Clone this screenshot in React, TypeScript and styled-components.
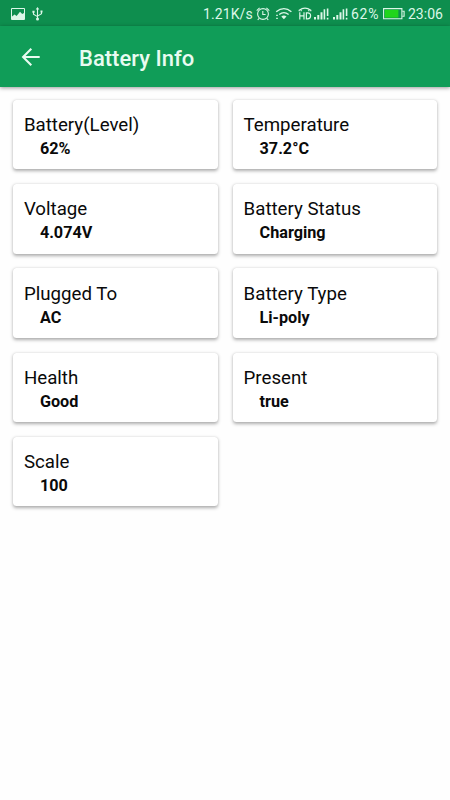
import React from 'react';
import styled, { createGlobalStyle } from 'styled-components';

const GlobalStyle = createGlobalStyle`
  * { box-sizing: border-box; }
  body {
    margin: 0;
    background: #fefefe;
    font-family: Roboto, sans-serif;
    color: #0a0a0a;
  }
`;

const Screen = styled.div`
  width: 450px;
  min-height: 800px;
  background: #fefefe;
`;

const StatusBar = styled.div`
  display: flex;
  align-items: center;
  justify-content: space-between;
  height: 26px;
  padding: 1px 6px 0 11px;
  background: #0e8e4e;
  color: #dcf7e8;
`;

const StatusGroup = styled.div`
  display: flex;
  align-items: center;
`;

const StatusIcon = styled.svg<{ $gap: number }>`
  display: block;
  flex: none;
  margin-left: ${(p) => p.$gap}px;
`;

const StatusText = styled.span<{ $width: number; $gap?: number; $spacing?: number }>`
  flex: none;
  width: ${(p) => p.$width}px;
  margin-left: ${(p) => p.$gap ?? 0}px;
  font-size: 14px;
  line-height: 26px;
  letter-spacing: ${(p) => p.$spacing ?? 0}px;
  white-space: nowrap;
`;

const AppBar = styled.header`
  display: flex;
  align-items: center;
  height: 61px;
  padding: 2px 20px 0;
  background: #109d58;
  color: #e9fbf1;
  box-shadow: 0 1px 4px rgba(0, 0, 0, 0.4);
`;

const BackButton = styled.button`
  display: flex;
  width: 22px;
  height: 22px;
  margin-top: -2px;
  padding: 0;
  border: 0;
  background: none;
  color: inherit;
`;

const Title = styled.h1`
  margin: 2px 0 0 37px;
  font-size: 22px;
  line-height: 30px;
  font-weight: 500;
`;

const CardGrid = styled.main`
  display: grid;
  grid-template-columns: repeat(2, 204.7px);
  grid-auto-rows: 69.5px;
  gap: 14.75px 15px;
  padding: 12.95px 12.9px;
`;

const Card = styled.section`
  padding: 13.2px 11px 0;
  background: #fff;
  border-radius: 3.5px;
  box-shadow: 0 1.5px 3.5px rgba(0, 0, 0, 0.32), 0 0 1px rgba(0, 0, 0, 0.1);
`;

const Label = styled.div`
  font-size: 18.7px;
  line-height: 24px;
`;

const Value = styled.div`
  padding-left: 16px;
  font-size: 16.2px;
  line-height: 24px;
  font-weight: 700;
`;

const entries = [
  { label: 'Battery(Level)', value: '62%' },
  { label: 'Temperature', value: '37.2°C' },
  { label: 'Voltage', value: '4.074V' },
  { label: 'Battery Status', value: 'Charging' },
  { label: 'Plugged To', value: 'AC' },
  { label: 'Battery Type', value: 'Li-poly' },
  { label: 'Health', value: 'Good' },
  { label: 'Present', value: 'true' },
  { label: 'Scale', value: '100' },
];

const PictureIcon = () => (
  <StatusIcon $gap={0} width="14" height="12" viewBox="0 0 14 12">
    <path d="M.5.5h13v11H.5z" fill="none" stroke="currentColor" strokeWidth="1" />
    <path d="M1 11V8.6l2.6-2.2 2 1.5 3.4-4.2 2.2 2.4L13 5v6z" fill="currentColor" />
  </StatusIcon>
);

const UsbIcon = () => (
  <StatusIcon $gap={7} width="11" height="14" viewBox="0 0 11 14" fill="none" stroke="currentColor" strokeWidth="1.1">
    <path d="M5.5 1v10M1.5 5v2.2l4 2.4M9.5 4.5v2.2l-4 2.4" />
    <path d="M5.5 0l1.8 2.5H3.7zM.4 3.8h2.2v2H.4zM8.5 3.5h2v2h-2z" fill="currentColor" stroke="none" />
    <circle cx="5.5" cy="12" r="1.5" fill="currentColor" stroke="none" />
  </StatusIcon>
);

const AlarmIcon = () => (
  <StatusIcon $gap={5} width="14" height="14" viewBox="0 0 14 14" fill="none" stroke="currentColor" strokeWidth="1.1">
    <circle cx="7" cy="7" r="5.4" />
    <path d="M6.8 4v3.5h2.8M.7 3.6L3.6.9M10.4.9l2.9 2.7M3.2 11.3l-1.5 1.7M10.8 11.3l1.5 1.7" />
  </StatusIcon>
);

const WifiIcon = () => (
  <StatusIcon $gap={5} width="17" height="13" viewBox="0 0 17 13" fill="none" stroke="currentColor" strokeWidth="1.4">
    <path d="M1.2 4.8Q9-1.5 16.4 4.8M4.2 7.5q4.7-3.8 9.4 0" />
    <path d="M6.3 9.6q2.6-2 5.2 0L8.9 12.2z" fill="currentColor" stroke="none" />
    <path d="M1.2 8.4h1.6M1.2 11.4h1.6" />
  </StatusIcon>
);

const HdCallIcon = () => (
  <StatusIcon $gap={6} width="14" height="13" viewBox="0 0 14 13" fill="none" stroke="currentColor" strokeWidth="1.2">
    <path d="M1.2 4.3V3.2Q7-1 12.8 3.2v1.1" />
    <path d="M3.2 4.2V2.8M10.8 4.2V2.8" />
    <path d="M1.8 5.2v7.3M6 5.2v7.3M1.8 8.8H6M8.4 5.8v6.1h1.2q3 0 3-3.05t-3-3.05z" />
  </StatusIcon>
);

const SignalIcon = ({ gap }: { gap: number }) => (
  <StatusIcon $gap={gap} width="15" height="12" viewBox="0 0 15 12" fill="currentColor">
    <path d="M0 9h2v2.5H0zM3.3 7h2v4.5h-2zM6.5 4.2h2v7.3h-2zM9.6 1.2h1.6v10.3H9.6zM12.8.5h1.6v7.6h-1.6zM12.8 9.7h1.6v1.8h-1.6z" />
  </StatusIcon>
);

const BatteryIcon = () => (
  <StatusIcon $gap={3} width="22" height="12" viewBox="0 0 22 12">
    <path d="M.6.6h18.3v10.2H.6z" fill="none" stroke="currentColor" strokeWidth="1.1" />
    <path d="M19.3 3.2h1.8v5h-1.8" fill="none" stroke="currentColor" strokeWidth="1.1" />
    <path d="M1.8 1.8h13.6v7.8H1.8z" fill="#20d51c" />
  </StatusIcon>
);

const BackArrow = () => (
  <svg width="22" height="22" viewBox="0 0 22 22" fill="none" stroke="currentColor" strokeWidth="2.1">
    <path d="M19.7 11H3.4M11.3 2.8L3.1 11l8.2 8.2" />
  </svg>
);

export default function App() {
  return (
    <Screen>
      <GlobalStyle />
      <StatusBar>
        <StatusGroup>
          <PictureIcon />
          <UsbIcon />
        </StatusGroup>
        <StatusGroup>
          <StatusText $width={48} $spacing={0.1}>1.21K/s</StatusText>
          <AlarmIcon />
          <WifiIcon />
          <HdCallIcon />
          <SignalIcon gap={2} />
          <SignalIcon gap={4} />
          <StatusText $width={29} $gap={3} $spacing={0.7}>62%</StatusText>
          <BatteryIcon />
          <StatusText $width={36} $gap={3}>23:06</StatusText>
        </StatusGroup>
      </StatusBar>
      <AppBar>
        <BackButton aria-label="Back">
          <BackArrow />
        </BackButton>
        <Title>Battery Info</Title>
      </AppBar>
      <CardGrid>
        {entries.map((entry) => (
          <Card key={entry.label}>
            <Label>{entry.label}</Label>
            <Value>{entry.value}</Value>
          </Card>
        ))}
      </CardGrid>
    </Screen>
  );
}
